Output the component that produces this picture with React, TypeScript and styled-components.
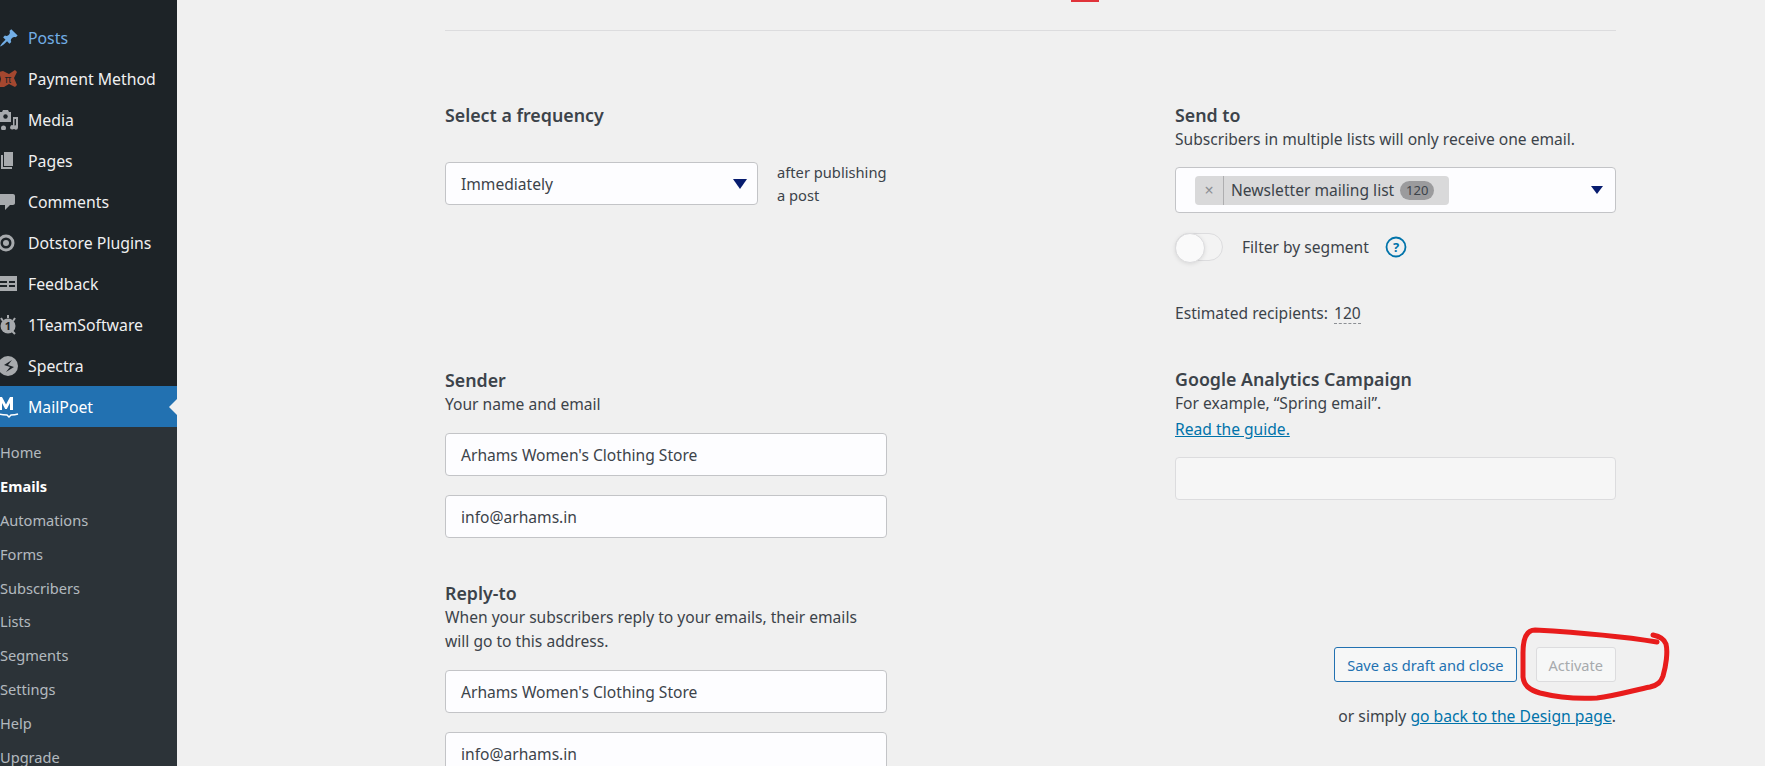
import React from "react";
import styled, { createGlobalStyle } from "styled-components";

const GlobalStyle = createGlobalStyle`
    html, body {
        margin: 0;
        height: 766px;
        overflow: hidden;
        background: #f0f0f0;
    }
    * { box-sizing: border-box; }
`;

const Page = styled.div`
    position: relative;
    display: flex;
    width: 1765px;
    height: 766px;
    overflow: hidden;
    font-family: "Noto Sans", "Open Sans", sans-serif;
    font-size: 15.6px;
    color: #3c434a;
`;

const Sidebar = styled.nav`
    flex: 0 0 177px;
    height: 766px;
    padding-top: 17px;
    background: #1d2327;
    overflow: hidden;
`;

const MenuItem = styled.div<{ $active?: boolean; $current?: boolean }>`
    position: relative;
    display: flex;
    align-items: center;
    height: 41px;
    font-size: 15.8px;
    color: ${p => (p.$current ? "#fff" : p.$active ? "#72aee6" : "#f0f0f1")};
    background: ${p => (p.$current ? "#2271b1" : "transparent")};

    ${p => p.$current && `
        &::after {
            content: "";
            position: absolute;
            right: 0;
            top: 50%;
            margin-top: -8px;
            border: 8px solid transparent;
            border-right-color: #f0f0f0;
            border-left-width: 0;
        }
    `}
`;

const MenuIcon = styled.span`
    flex: 0 0 28px;
    display: flex;
    justify-content: flex-end;
    padding-right: 9px;
    overflow: hidden;
    svg { flex: 0 0 auto; display: block; }
`;

const SubMenu = styled.div`
    padding-top: 8px;
    background: #2c3338;
`;

const SubItem = styled.div<{ $current?: boolean }>`
    display: flex;
    align-items: center;
    height: 33.9px;
    font-size: 14.6px;
    font-weight: ${p => (p.$current ? 700 : 400)};
    color: ${p => (p.$current ? "#fff" : "rgba(240,246,252,0.7)")};
`;

const Main = styled.main`
    flex: 1;
    padding-left: 268px;
    padding-right: 149px;
`;

const TopRule = styled.div`
    height: 31px;
    border-bottom: 1px solid #dcdcde;
`;

const Columns = styled.div`
    display: flex;
    justify-content: space-between;
`;

const LeftColumn = styled.div`
    width: 442px;
    padding-top: 73px;
`;

const RightColumn = styled.div`
    width: 441px;
    padding-top: 73px;
`;

const Heading = styled.div`
    font-size: 17.8px;
    line-height: 22px;
    font-weight: 600;
    color: #3c434a;
`;

const Hint = styled.div`
    margin-top: 1px;
    margin-bottom: -2px;
    line-height: 24px;
    white-space: nowrap;
`;

const GuideLink = styled.a`
    display: block;
    margin-top: 4px;
    line-height: 25px;
    color: #0073aa;
    text-decoration: underline;
`;

const FrequencyRow = styled.div`
    display: flex;
    align-items: center;
    gap: 19px;
    margin-top: 36px;
    height: 43px;
`;

const SelectBox = styled.div<{ $width?: number }>`
    display: flex;
    align-items: center;
    justify-content: space-between;
    width: ${p => (p.$width ? `${p.$width}px` : "100%")};
    height: 43px;
    padding: 0 10px 0 15px;
    background: #fdfdff;
    border: 1px solid #c3c4c7;
    border-radius: 4px;
`;

const Arrow = styled.span<{ $small?: boolean }>`
    width: 0;
    height: 0;
    border-left: ${p => (p.$small ? 6 : 7)}px solid transparent;
    border-right: ${p => (p.$small ? 6 : 7)}px solid transparent;
    border-top: ${p => (p.$small ? 8 : 10)}px solid #071c6f;
`;

const AfterText = styled.div`
    font-size: 14.7px;
    line-height: 23px;
`;

const TextField = styled.div`
    display: flex;
    align-items: center;
    height: 43px;
    margin-top: 19px;
    padding: 0 15px;
    background: #fdfdff;
    border: 1px solid #c3c4c7;
    border-radius: 4px;
`;

const EmptyField = styled.div`
    height: 43px;
    margin-top: 15px;
    background: #f6f6f6;
    border: 1px solid #dcdcde;
    border-radius: 4px;
`;

const SenderSection = styled.section`
    margin-top: 164px;
`;

const ReplySection = styled.section`
    margin-top: 44px;
`;

const GoogleSection = styled.section`
    margin-top: 44px;
`;

const ListSelect = styled(SelectBox)`
    height: 46px;
    margin-top: 18px;
    padding-left: 19px;
    padding-right: 12px;
`;

const Chip = styled.div`
    display: flex;
    align-items: center;
    width: 254px;
    height: 29px;
    background: #d9d9da;
    border-radius: 4px;
`;

const ChipRemove = styled.span`
    flex: 0 0 29px;
    height: 100%;
    display: flex;
    align-items: center;
    justify-content: center;
    border-right: 1px solid #aeaeb0;
    color: #8c8f94;
    font-size: 16px;
`;

const ChipLabel = styled.span`
    margin-left: 7px;
    white-space: nowrap;
`;

const ChipCount = styled.span`
    margin-left: 6px;
    width: 34px;
    height: 19px;
    line-height: 19px;
    border-radius: 10px;
    background: #9b9b9d;
    text-align: center;
    font-size: 13px;
`;

const FilterRow = styled.div`
    display: flex;
    align-items: center;
    margin-top: 20px;
    height: 28px;
`;

const Toggle = styled.span`
    position: relative;
    flex: 0 0 48px;
    height: 28px;
    border: 1px solid #dcdcde;
    border-radius: 14px;
    background: #f3f3f3;
    &::after {
        content: "";
        position: absolute;
        left: -1px;
        top: -1px;
        width: 28px;
        height: 28px;
        border-radius: 50%;
        background: #fafafa;
        border: 1px solid #dcdcde;
        box-shadow: 0 1px 4px rgba(0, 0, 0, 0.1);
    }
`;

const FilterLabel = styled.span`
    margin-left: 19px;
`;

const HelpIcon = styled.span`
    display: flex;
    margin-left: 16px;
`;

const Estimated = styled.div`
    margin-top: 41px;
    line-height: 22px;
`;

const Dotted = styled.span`
    display: inline-block;
    margin-left: 2px;
    border-bottom: 1px dashed #8c8f94;
    line-height: 19px;
`;

const ActionRow = styled.div`
    display: flex;
    justify-content: flex-end;
    gap: 19px;
    margin-top: 147px;
`;

const Button = styled.div<{ $disabled?: boolean }>`
    display: flex;
    align-items: center;
    justify-content: center;
    height: 35px;
    border-radius: 3px;
    font-size: 14.6px;
    padding: 0 12px;
    background: #f6f7f7;
    border: 1px solid ${p => (p.$disabled ? "#dcdcde" : "#2271b1")};
    color: ${p => (p.$disabled ? "#a7aaad" : "#2271b1")};
`;

const BackLine = styled.div`
    margin-top: 23px;
    text-align: right;
    font-size: 15.7px;
    line-height: 22px;
    white-space: nowrap;
`;

const BackLink = styled.a`
    color: #0073aa;
    text-decoration: underline;
`;

const RedMark = styled.div`
    position: absolute;
    left: 1071px;
    top: 0;
    width: 28px;
    height: 2px;
    background: #e0333a;
`;

const Scribble = styled.svg`
    position: absolute;
    left: 1500px;
    top: 610px;
    pointer-events: none;
`;

const grey = "#a7aaad";

const icons: Record<string, React.ReactNode> = {
    posts: (
        <svg width="20" height="20" viewBox="0 0 20 20" fill="#72aee6">
            <path d="M10.44 3.02l1.82-1.82 6.36 6.35-1.83 1.82c-1.05-.68-2.48-.57-3.41.36l-.75.75c-.92.93-1.04 2.35-.35 3.41l-1.83 1.82-2.41-2.41-2.8 2.79c-.42.42-3.38 2.71-3.8 2.29s1.86-3.39 2.28-3.81l2.79-2.79L4.1 9.36l1.83-1.82c1.05.69 2.48.57 3.4-.36l.75-.75c.93-.92 1.05-2.35.36-3.41z" />
        </svg>
    ),
    payment: (
        <svg width="20" height="20" viewBox="0 0 20 20">
            <path d="M0 3l4-1 6 3 6-4 2 2-3 6 3 7-2 2-6-3-5 3H0l2-8z" fill="#a4472f" />
            <text x="9" y="14" fontSize="10" textAnchor="middle" fill="#1d2327" fontFamily="Noto Sans">π</text>
        </svg>
    ),
    media: (
        <svg width="20" height="20" viewBox="0 0 20 20" fill={grey}>
            <path d="M1 2h2l1-2h5l1 2h2v10H1z" />
            <circle cx="6.500" cy="6.500" r="2.200" fill="#1d2327" />
            <path d="M14 7h5v10.500a2.200 2.200 0 1 1-2-2.200V9h-1.500v8.500a2.200 2.200 0 1 1-1.500-2.200zM2 18a2.500 2.500 0 1 0 5 0 2.500 2.500 0 1 0-5 0z" />
        </svg>
    ),
    pages: (
        <svg width="20" height="20" viewBox="0 0 20 20" fill={grey}>
            <path d="M5 1h9v14H5z" />
            <path d="M2 4h2v12h9v2H2z" />
        </svg>
    ),
    comments: (
        <svg width="20" height="20" viewBox="0 0 20 20" fill={grey}>
            <path d="M1 2h13c1.100 0 2 .9 2 2v7c0 1.100-.9 2-2 2h-3l-5 5v-5H1z" />
        </svg>
    ),
    dotstore: (
        <svg width="20" height="20" viewBox="0 0 20 20">
            <circle cx="7" cy="10" r="7" fill="none" stroke={grey} strokeWidth="3" />
            <circle cx="7" cy="10" r="3" fill={grey} />
        </svg>
    ),
    feedback: (
        <svg width="20" height="20" viewBox="0 0 20 20" fill={grey}>
            <path d="M0 2h18v15H0z" />
            <path d="M0 7h8v2H0zM0 11h8v2H0zM10 7h6v2h-6zM10 11h6v2h-6z" fill="#1d2327" />
        </svg>
    ),
    team: (
        <svg width="20" height="20" viewBox="0 0 20 20">
            <circle cx="9" cy="11" r="7.500" fill={grey} />
            <path d="M2 3l2 3M9 0v3M16 3l-2 3M13 16l3 3" stroke={grey} strokeWidth="2" />
            <text x="9" y="15" fontSize="11" fontWeight="700" textAnchor="middle" fill="#1d2327" fontFamily="Noto Sans">1</text>
        </svg>
    ),
    spectra: (
        <svg width="20" height="20" viewBox="0 0 20 20">
            <circle cx="9" cy="10" r="10" fill={grey} />
            <path d="M13 4L5 9l6 2-4 5 8-5-6-2z" fill="#1d2327" />
        </svg>
    ),
    mailpoet: (
        <svg width="20" height="24" viewBox="0 0 20 24" fill="none">
            <path d="M0 15V2h3l4 7.500L11 2h3v13h-3V8l-3.200 6H6.200L3 8v7z" fill="#fff" />
            <path d="M0 19c3 1 6 1 8 1l2 2 2-2c2 0 4 0 7-1" stroke="#fff" strokeWidth="1.500" />
        </svg>
    ),
};

const mainItems = [
    { key: "posts", label: "Posts", active: true },
    { key: "payment", label: "Payment Method" },
    { key: "media", label: "Media" },
    { key: "pages", label: "Pages" },
    { key: "comments", label: "Comments" },
    { key: "dotstore", label: "Dotstore Plugins" },
    { key: "feedback", label: "Feedback" },
    { key: "team", label: "1TeamSoftware" },
    { key: "spectra", label: "Spectra" },
];

const subItems = ["Home", "Emails", "Automations", "Forms", "Subscribers", "Lists", "Segments", "Settings", "Help", "Upgrade"];

function App() {
    return (
        <Page>
            <GlobalStyle />
            <Sidebar>
                {mainItems.map(item => (
                    <MenuItem key={item.key} $active={item.active}>
                        <MenuIcon>{icons[item.key]}</MenuIcon>
                        {item.label}
                    </MenuItem>
                ))}
                <MenuItem $current>
                    <MenuIcon>{icons.mailpoet}</MenuIcon>
                    MailPoet
                </MenuItem>
                <SubMenu>
                    {subItems.map(label => (
                        <SubItem key={label} $current={label === "Emails"}>{label}</SubItem>
                    ))}
                </SubMenu>
            </Sidebar>
            <Main>
                <TopRule />
                <Columns>
                    <LeftColumn>
                        <Heading>Select a frequency</Heading>
                        <FrequencyRow>
                            <SelectBox $width={313}>
                                Immediately
                                <Arrow />
                            </SelectBox>
                            <AfterText>after publishing<br />a post</AfterText>
                        </FrequencyRow>
                        <SenderSection>
                            <Heading>Sender</Heading>
                            <Hint>Your name and email</Hint>
                            <TextField>Arhams Women's Clothing Store</TextField>
                            <TextField>info@arhams.in</TextField>
                        </SenderSection>
                        <ReplySection>
                            <Heading>Reply-to</Heading>
                            <Hint>When your subscribers reply to your emails, their emails<br />will go to this address.</Hint>
                            <TextField>Arhams Women's Clothing Store</TextField>
                            <TextField>info@arhams.in</TextField>
                        </ReplySection>
                    </LeftColumn>
                    <RightColumn>
                        <Heading>Send to</Heading>
                        <Hint>Subscribers in multiple lists will only receive one email.</Hint>
                        <ListSelect>
                            <Chip>
                                <ChipRemove>×</ChipRemove>
                                <ChipLabel>Newsletter mailing list</ChipLabel>
                                <ChipCount>120</ChipCount>
                            </Chip>
                            <Arrow $small />
                        </ListSelect>
                        <FilterRow>
                            <Toggle />
                            <FilterLabel>Filter by segment</FilterLabel>
                            <HelpIcon>
                                <svg width="22" height="22" viewBox="0 0 22 22" fill="none">
                                    <circle cx="11" cy="11" r="9.500" stroke="#0073aa" strokeWidth="1.800" />
                                    <text x="11" y="15.500" fontSize="13" fontWeight="700" textAnchor="middle" fill="#0073aa" fontFamily="Noto Sans">?</text>
                                </svg>
                            </HelpIcon>
                        </FilterRow>
                        <Estimated>Estimated recipients: <Dotted>120</Dotted></Estimated>
                        <GoogleSection>
                            <Heading>Google Analytics Campaign</Heading>
                            <Hint>For example, “Spring email”.</Hint>
                            <GuideLink>Read the guide.</GuideLink>
                            <EmptyField />
                        </GoogleSection>
                        <ActionRow>
                            <Button>Save as draft and close</Button>
                            <Button $disabled>Activate</Button>
                        </ActionRow>
                        <BackLine>or simply <BackLink>go back to the Design page</BackLink>.</BackLine>
                    </RightColumn>
                </Columns>
            </Main>
            <RedMark />
            <Scribble width="180" height="100" viewBox="0 0 180 100" fill="none">
                <path
                    d="M157 32C120 26 70 22 35 20C26 20 23 30 23 43L23 67C24 76 30 80 40 83C60 88 80 89 97 88C115 86 135 80 150 77C158 75 161 72 163 66C166 56 168 42 166 34C164 28 158 26 153 25"
                    stroke="#e81c1c"
                    strokeWidth="5"
                    strokeLinecap="round"
                    strokeLinejoin="round"
                />
            </Scribble>
        </Page>
    );
}

export default App;
